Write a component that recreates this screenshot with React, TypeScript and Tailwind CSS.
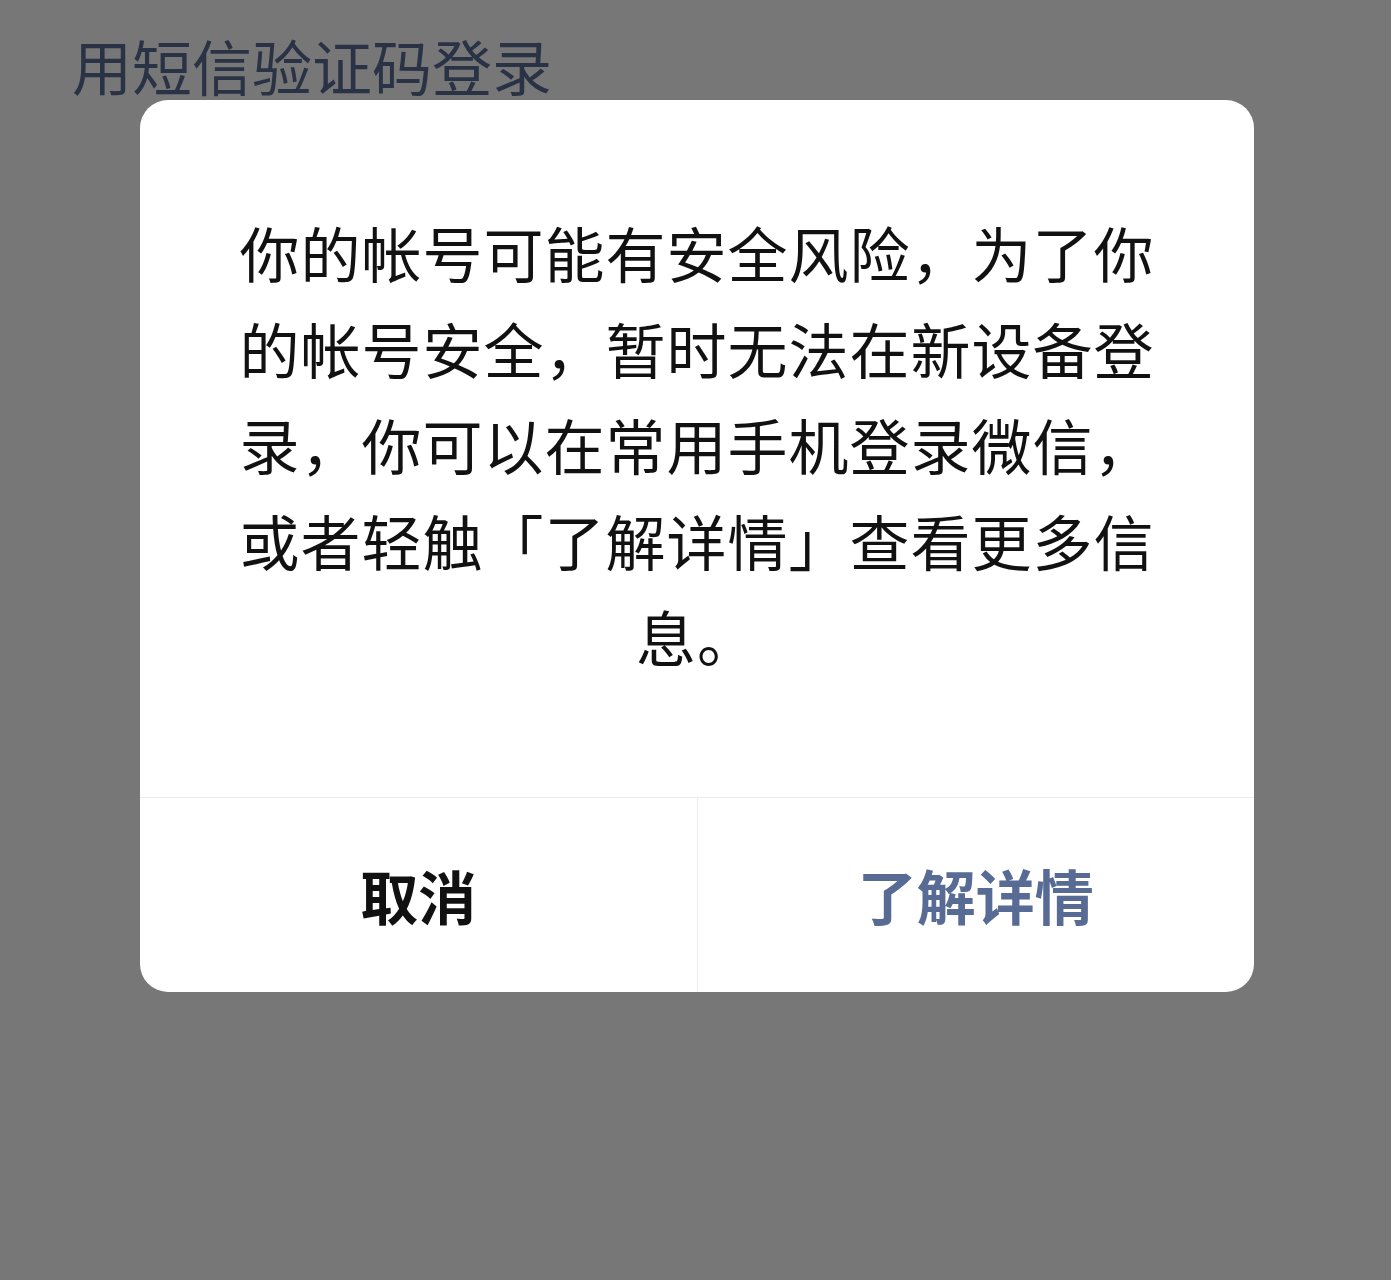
const lines = [
  '你的帐号可能有安全风险，为了你',
  '的帐号安全，暂时无法在新设备登',
  '录，你可以在常用手机登录微信，',
  '或者轻触「了解详情」查看更多信',
  '息。',
];

export default function App() {
  const font = { fontFamily: '"Noto Sans CJK SC", "Noto Sans", sans-serif' };
  return (
    <div className="relative min-h-[1280px] w-full bg-[#777777]" style={font}>
      {/* page underneath the dim layer */}
      <div className="pl-[72px] pt-[35px]">
        <h1 className="text-[60px] leading-[60px] font-normal text-[#2a3345]">用短信验证码登录</h1>
      </div>

      {/* dialog */}
      <div className="absolute left-[140px] top-[100px] w-[1114px] overflow-hidden rounded-[28px] bg-white">
        <div className="flex flex-col items-center px-[90px] pt-[104px] pb-[113px] text-[60px] leading-[96px] tracking-[1px] text-[#111111]">
          {lines.map((l, i) => (
            <p key={i} className="whitespace-nowrap text-center">
              {l}
            </p>
          ))}
        </div>
        <div className="flex h-[195px] border-t border-[#ececec]">
          <button className="flex flex-1 items-center justify-center text-[58px] font-bold text-[#111111]">
            取消
          </button>
          <div className="w-px bg-[#ececec]" />
          <button className="flex flex-1 items-center justify-center text-[59px] font-bold text-[#576b95]">
            了解详情
          </button>
        </div>
      </div>
    </div>
  );
}
